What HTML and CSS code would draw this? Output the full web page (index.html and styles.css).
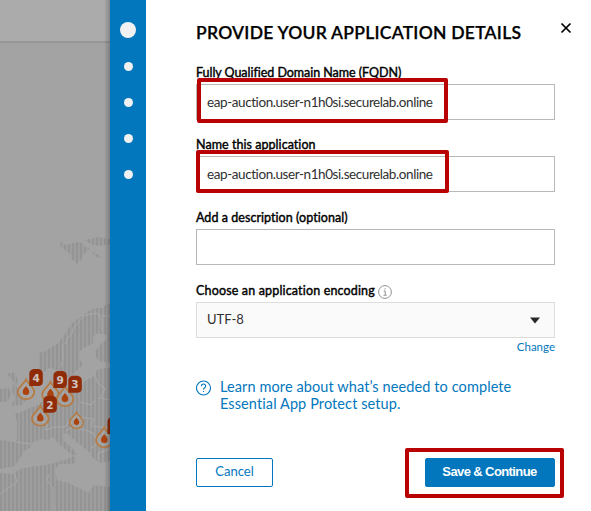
FILE: index.html
```html
<!DOCTYPE html>
<html lang="en">
<head>
<meta charset="utf-8">
<title>Provide your application details</title>
<link rel="stylesheet" href="styles.css">
</head>
<body>
<div class="page">
  <aside class="backdrop">
    <svg class="map" width="110" height="511" viewBox="0 0 110 511">
      <defs>
        <pattern id="stripes" width="4" height="8" patternUnits="userSpaceOnUse">
          <rect width="4" height="8" fill="#9e9e9e"/><rect width="2" height="8" fill="#949494"/>
        </pattern>
        <linearGradient id="edge"><stop offset="0" stop-opacity="0"/><stop offset="1" stop-opacity=".22"/></linearGradient>
        <g id="drop">
          <path d="M0-9.500C2-5 8.300-2 8.300 3A8.300 7.200 0 0 1-8.300 3C-8.300-2-2-5 0-9.500Z" fill="#aaa" fill-opacity=".5" stroke="#b57b42" stroke-width="1.800"/>
          <path d="M0-3C1-1 3.300 0 3.300 2.800A3.300 3.200 0 0 1-3.300 2.800C-3.300 0-1-1 0-3Z" fill="#ac430e"/>
        </g>
        <path id="badge" d="M4 0H9.500Q13.500 1 13.500 5V12.500Q13.500 16.500 9.500 17H0V4.500Q0 1 4 0Z"/>
      </defs>
      <rect width="110" height="511" fill="#a3a3a3"/>
      <rect width="110" height="42" fill="#ababab"/>
      <rect y="41" width="110" height="2" fill="#969696"/>
      <g fill="url(#stripes)">
        <path d="M60 242L66 245 73 243 77 242 82 243 85 247 90 248 85 253 82 259 77 264 71 258 70 254 65 250 61 247Z"/>
        <path d="M84 240L90 239 97 237 110 239V244L98 246 91 244Z"/>
        <path d="M92 251L97 254 102 257 98 258 94 255Z"/>
        <path d="M110 304L107 304 102 308 96 308 88 311 84 315 80 317 75 321 71 324 66 332 63 337 58 343 52 347 46 351 39 353V370L44 372 50 367 55 370 62 372 65 379 71 376 77 370 83 365 79 358 80 351 87 346 93 344V336L98 333 107 335 107 339 101 344 96 350V357L99 361 110 363Z"/>
        <path d="M7 374L14 372 18 380 16 386 22 394 26 400 22 405 11 406 15 398 12 391 14 382Z"/>
        <path d="M0 389L9 388 11 395 7 402 0 402Z"/>
        <path d="M110 368L98 369 93 377 86 380 80 386 72 388 65 391 59 392 52 396 44 400 38 405 30 408 21 412 14 414 17 421V438L16 442 9 441 0 440V511H110Z"/>
      </g>
      <g fill="#a3a3a3">
        <path d="M0 418L8 421 15 427 17 438 14 442 0 440Z"/>
        <path d="M0 469L14 466 20 459 24 451 31 447 33 442 42 439 48 440 53 437 58 443 65 449 75 457 76 463 69 464 59 464 55 470 57 480 68 483 77 487 88 493 94 485 110 487V461L100 463 93 458 90 453 83 447 73 439 67 433 62 434 64 441 72 448 77 454 70 458 58 462 46 465 31 467 20 469 13 474 0 473Z"/>
      </g>
      <g fill="none" stroke="#aaa" stroke-width=".9">
        <path d="M110 316L101 316 97 313 91 314 83 316 79 322 73 328 72 334 67 338 66 343 62 346 63 357 61 367M98 314L102 321 102 332"/>
        <path d="M16 442L31 444M15 474L17 482 10 487 0 494M49 475L47 480 53 488 53 511M31 414L38 420 48 424 45 430 54 427 65 427 70 420 78 417 94 419 91 426 110 428M65 431L73 427 84 430 93 433 98 444 91 448M94 370L97 382 105 389 100 398 110 400M80 402L91 405 96 399M98 460V453L110 449"/>
      </g>
      <use href="#drop" x="26" y="389"/>
      <use href="#drop" x="50.500" y="391.500"/>
      <use href="#drop" x="65" y="396"/>
      <use href="#drop" x="40.300" y="415.500"/>
      <use href="#drop" transform="translate(76.500 420) scale(.82)"/>
      <use href="#drop" x="104.300" y="437"/>
      <g fill="#902b08">
        <use href="#badge" x="29.300" y="369"/>
        <use href="#badge" x="53.400" y="371"/>
        <use href="#badge" x="68.300" y="375.700"/>
        <use href="#badge" x="43.400" y="395.800"/>
        <use href="#badge" x="107.500" y="417"/>
      </g>
      <g class="counts"><text x="36.200" y="382.300">4</text><text x="60.200" y="384.300">9</text><text x="75" y="388.300">3</text><text x="50" y="408.500">2</text></g>
      <rect x="104" width="6" height="511" fill="url(#edge)"/>
    </svg>
  </aside>
  <nav class="steps">
    <span class="dot current"></span><span class="dot"></span><span class="dot"></span><span class="dot"></span><span class="dot"></span>
  </nav>
  <main class="panel">
    <header class="head">
      <h1>PROVIDE YOUR APPLICATION DETAILS</h1>
      <svg class="close" width="12" height="12" viewBox="0 0 12 12"><path d="M1.500 1.500L10.500 10.500M10.500 1.500L1.500 10.500" stroke="#000" stroke-width="1.700"/></svg>
    </header>
    <div class="field short">
      <div class="label"><span class="l1">Fully Qualified Domain Name (FQDN)</span></div>
      <div class="input"><span class="value">eap-auction.user-n1h0si.securelab.online</span><i class="mark first"></i></div>
    </div>
    <div class="field">
      <div class="label"><span class="l2">Name this application</span></div>
      <div class="input"><span class="value">eap-auction.user-n1h0si.securelab.online</span><i class="mark second"></i></div>
    </div>
    <div class="field">
      <div class="label"><span class="l3">Add a description (optional)</span></div>
      <div class="input"></div>
    </div>
    <div class="field">
      <div class="label"><span class="l4">Choose an application encoding</span>
        <svg class="info" width="14" height="14" viewBox="0 0 14 14" fill="none" stroke="#929292"><circle cx="7" cy="7" r="6.400"/><path d="M5.700 6H7.200V10M5.500 10.200H8.700M7 3.300V4.600"/></svg>
      </div>
      <div class="input select"><span class="option">UTF-8</span><svg class="caret" width="10" height="7" viewBox="0 0 10 7"><path d="M0 .5H10L5 6.500Z" fill="#282828"/></svg></div>
      <a class="change">Change</a>
    </div>
    <div class="learn">
      <svg width="16" height="16" viewBox="0 0 16 16" fill="none" stroke="#0277bd" stroke-width="1.100"><circle cx="7.500" cy="8" r="7"/><path d="M5.400 6.300C5.400 3.300 9.700 3.400 9.700 6.100C9.700 7.800 7.500 7.700 7.500 9.600M7.500 10.900V12.100"/></svg>
      <p>Learn more about what’s needed to complete<br>Essential App Protect setup.</p>
    </div>
    <footer class="actions">
      <button class="btn cancel">Cancel</button>
      <div class="savewrap"><button class="btn save">Save &amp; Continue</button><i class="mark third"></i></div>
    </footer>
  </main>
</div>
</body>
</html>
```
FILE: styles.css
```css
* { box-sizing: border-box; }
body { margin: 0; background: #fff; color: #000; font-family: Lato, sans-serif; font-variant-ligatures: none; overflow: hidden; }
.page { display: flex; width: 591px; height: 511px; }
.backdrop { width: 110px; flex: none; }
.map { display: block; }
.counts { fill: #d0c5c0; font: bold 10.5px "DejaVu Sans", sans-serif; text-anchor: middle; }
.steps { width: 36px; flex: none; background: #0277bd; display: flex; flex-direction: column; align-items: center; padding-top: 22px; }
.dot { width: 9px; height: 9px; border-radius: 50%; background: #f1f1f1; margin-bottom: 27px; flex: none; }
.dot.current { width: 16px; height: 16px; margin-bottom: 23.5px; }
.panel { flex: 1; padding: 0 36px 0 50px; white-space: nowrap; }
.head { display: flex; height: 63px; padding-top: 22px; justify-content: space-between; }
h1 { margin: 0; font-size: 17.5px; line-height: 22px; font-weight: 600; letter-spacing: .25px; -webkit-text-stroke: .25px #000; }
.close { flex: none; margin: 0 -17px 0 0; }
.field { height: 73px; }
.short { height: 72px; }
.label { display: flex; align-items: center; height: 21px; line-height: 18px; padding-bottom: 2px; font-size: 12.5px; font-weight: 400; -webkit-text-stroke: .4px #000; }
.l1 { letter-spacing: -.04px; }
.l2, .l3 { letter-spacing: .05px; }
.l4 { letter-spacing: .16px; }
.input { position: relative; height: 36px; border: 1px solid #b8b8b8; display: flex; align-items: center; padding: 0 14px 1px 10px; font-size: 13px; color: #303030; }
.value { font-size: 13.5px; letter-spacing: -.42px; }
.info { margin: 2px 0 0 3px; }
.select { background: #fafafa; border-color: #dcdcdc; justify-content: space-between; padding-bottom: 3px; }
.caret { margin-top: 4px; }
.change { display: block; text-align: right; color: #0277bd; font-size: 11.5px; line-height: 18px; }
.learn { display: flex; margin-top: 23px; height: 81px; color: #0277bd; }
.learn svg { flex: none; margin-top: 3px; }
.learn p { margin: 0 0 0 8px; padding-top: 1px; font-size: 14.5px; line-height: 17px; letter-spacing: .1px; }
.actions { display: flex; justify-content: space-between; }
.btn { height: 29px; border: 1px solid #0277bd; border-radius: 2px; font: 400 13px Lato, sans-serif; color: #0277bd; background: #fff; padding: 0 0 3px; display: block; }
.cancel { width: 77px; }
.savewrap { position: relative; }
.save { width: 130px; padding-right: 1px; background: #0277bd; color: #fff; font: bold 13px "Liberation Sans", sans-serif; letter-spacing: -.6px; }
.mark { position: absolute; border: 4px solid #b90202; border-radius: 2px; }
.first { left: 0; top: -7px; width: 251px; height: 45px; }
.second { left: -1px; top: -7px; width: 253px; height: 43px; }
.third { left: -20px; top: -10px; width: 159px; height: 50px; }
```
